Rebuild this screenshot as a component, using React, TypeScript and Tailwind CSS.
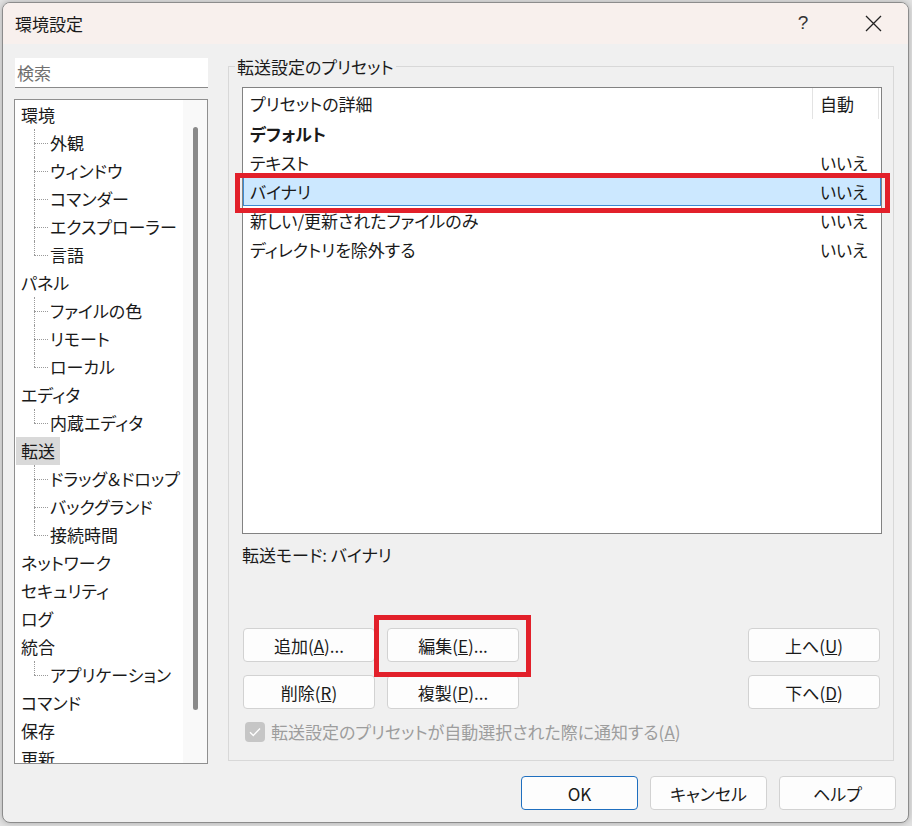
import React from 'react';

type Node = { t: string; sel?: boolean; children?: string[] };

const tree: Node[] = [
  { t: '環境', children: ['外観', 'ウィンドウ', 'コマンダー', 'エクスプローラー', '言語'] },
  { t: 'パネル', children: ['ファイルの色', 'リモート', 'ローカル'] },
  { t: 'エディタ', children: ['内蔵エディタ'] },
  { t: '転送', sel: true, children: ['ドラッグ＆ドロップ', 'バックグランド', '接続時間'] },
  { t: 'ネットワーク' },
  { t: 'セキュリティ' },
  { t: 'ログ' },
  { t: '統合', children: ['アプリケーション'] },
  { t: 'コマンド' },
  { t: '保存' },
  { t: '更新' },
];

const rows: { name: string; auto: string; bold?: boolean; sel?: boolean }[] = [
  { name: 'デフォルト', auto: '', bold: true },
  { name: 'テキスト', auto: 'いいえ' },
  { name: 'バイナリ', auto: 'いいえ', sel: true },
  { name: '新しい/更新されたファイルのみ', auto: 'いいえ' },
  { name: 'ディレクトリを除外する', auto: 'いいえ' },
];

function Btn({ children, w = 'w-[132px]', primary = false }: { children: React.ReactNode; w?: string; primary?: boolean }) {
  return (
    <div
      className={`${w} h-[34px] flex items-center justify-center rounded-[4px] bg-[#fdfdfd] text-[17px] leading-none whitespace-nowrap ${
        primary ? 'border border-[#1f6fbf]' : 'border border-[#d2d2d2]'
      }`}
    >
      {children}
    </div>
  );
}

function ChildRow({ label, last }: { label: string; last: boolean }) {
  return (
    <div className="relative h-[28px] flex items-center pl-[35px] whitespace-nowrap">
      <span
        className={`absolute left-[19px] top-0 border-l border-dotted border-[#9a9a9a] ${last ? 'h-[14px]' : 'h-[28px]'}`}
      />
      <span className="absolute left-[19px] top-[14px] w-[14px] border-t border-dotted border-[#9a9a9a]" />
      <span className="leading-[22px]">{label}</span>
    </div>
  );
}

export default function App() {
  return (
    <div className="relative w-[912px] h-[826px] overflow-hidden bg-[#e2e2e2] font-['Noto_Sans_CJK_JP',sans-serif] [font-feature-settings:'palt'] text-[17px] text-[#1a1a1a]">
      <div className="ml-[2px] mt-[2px] w-[907px] h-[821px] rounded-[8px] border border-[#8c8c8c] bg-[#f0f0f0] overflow-hidden flex flex-col shadow-[0_0_6px_rgba(0,0,0,0.25)]">
        {/* Title bar */}
        <div className="h-[41px] shrink-0 bg-[#f8f0ed] flex items-center">
          <div className="pl-[12px] text-[17px] leading-none flex-1">環境設定</div>
          <div className="w-[70px] h-full flex items-center justify-center text-[19px] text-[#333] font-['Liberation_Sans',sans-serif] font-light">?</div>
          <div className="w-[70px] h-full flex items-center justify-center">
            <svg width="17" height="17" viewBox="0 0 17 17">
              <path d="M1 1L16 16M16 1L1 16" stroke="#222" strokeWidth="1.3" fill="none" />
            </svg>
          </div>
        </div>

        {/* Body */}
        <div className="flex flex-1">
          {/* Left column */}
          <div className="pl-[11px] w-[205px] flex flex-col">
            <div className="mt-[14px] ml-px w-[193px] h-[30px] bg-white border-b border-[#8a8a8a] flex items-center pl-[2px] text-[#707070]">
              検索
            </div>
            <div className="mt-[11px] w-[194px] h-[665px] border border-[#8f8f8f] bg-white flex overflow-hidden">
              <div className="flex-1 pt-px">
                {tree.map((n) => (
                  <div key={n.t}>
                    <div className="h-[28px] flex items-center">
                      <span
                        className={`ml-px px-[5px] h-[28px] flex items-center leading-[22px] whitespace-nowrap ${n.sel ? 'bg-[#d9d9d9]' : ''}`}
                      >
                        {n.t}
                      </span>
                    </div>
                    {n.children?.map((c, i) => (
                      <ChildRow key={c} label={c} last={i === n.children!.length - 1} />
                    ))}
                  </div>
                ))}
              </div>
              <div className="w-[24px] shrink-0 bg-[#f9f9f9] flex justify-center">
                <div className="mt-[27px] w-[5px] h-[583px] rounded-full bg-[#8a8a8a]" />
              </div>
            </div>
          </div>

          {/* Right column */}
          <div className="ml-[20px] flex flex-col">
            <div className="relative mt-[22px] w-[666px] h-[695px] border border-[#d8d8d8]">
              <div className="absolute -top-[11px] left-[6px] px-[2px] bg-[#f0f0f0] leading-[22px]">転送設定のプリセット</div>

              {/* List */}
              <div className="mt-[20px] ml-[13px] w-[640px] h-[447px] border border-[#828282] bg-white">
                <div className="h-[31px] flex">
                  <div className="w-[569px] pl-[7px] flex items-center leading-[22px]">プリセットの詳細</div>
                  <div className="w-[67px] pl-[7px] flex items-center border-l border-r border-[#e3e3e3] leading-[22px]">自動</div>
                </div>
                {rows.map((r) => (
                  <div
                    key={r.name}
                    className={`h-[29px] flex ${r.sel ? 'bg-[#cce8ff] shadow-[inset_0_0_0_1px_#3d8bd4]' : ''}`}
                  >
                    <div className={`w-[569px] pl-[7px] flex items-center leading-[22px] ${r.bold ? 'font-bold' : ''}`}>{r.name}</div>
                    <div className="w-[68px] pl-[8px] flex items-center leading-[22px]">{r.auto}</div>
                  </div>
                ))}
              </div>

              <div className="mt-[10px] ml-[13px] leading-[22px]">転送モード: バイナリ</div>

              {/* Buttons */}
              <div className="mt-[62px] ml-[14px] mr-[13px] flex justify-between">
                <div className="flex gap-[12px]">
                  <Btn>
                    追加(<span className="underline">A</span>)...
                  </Btn>
                  <Btn>
                    編集(<span className="underline">E</span>)...
                  </Btn>
                </div>
                <Btn>
                  上へ(<span className="underline">U</span>)
                </Btn>
              </div>
              <div className="mt-[13px] ml-[14px] mr-[13px] flex justify-between">
                <div className="flex gap-[12px]">
                  <Btn>
                    削除(<span className="underline">R</span>)
                  </Btn>
                  <Btn>
                    複製(<span className="underline">P</span>)...
                  </Btn>
                </div>
                <Btn>
                  下へ(<span className="underline">D</span>)
                </Btn>
              </div>

              <div className="mt-[13px] ml-[16px] flex items-center gap-[6px] h-[20px]">
                <div className="w-[20px] h-[20px] rounded-[4px] bg-[#c6c6c6] flex items-center justify-center">
                  <svg width="12" height="10" viewBox="0 0 12 10">
                    <path d="M1 5.2L4.3 8.5L11 1.5" stroke="#fff" strokeWidth="1.3" fill="none" />
                  </svg>
                </div>
                <span className="text-[#9d9d9d] leading-[22px] whitespace-nowrap">
                  転送設定のプリセットが自動選択された際に通知する(<span className="underline">A</span>)
                </span>
              </div>
            </div>

            <div className="mt-[15px] w-[668px] flex justify-end gap-[12px]">
              <Btn w="w-[117px]" primary>
                OK
              </Btn>
              <Btn w="w-[117px]">キャンセル</Btn>
              <Btn w="w-[117px]">ヘルプ</Btn>
            </div>
          </div>
        </div>
      </div>

      {/* Annotation boxes */}
      <div className="absolute left-[235px] top-[173px] w-[655px] h-[40px] border-[5px] border-[#e2202a]" />
      <div className="absolute left-[374px] top-[615px] w-[157px] h-[62px] border-[5px] border-[#e2202a]" />
    </div>
  );
}
